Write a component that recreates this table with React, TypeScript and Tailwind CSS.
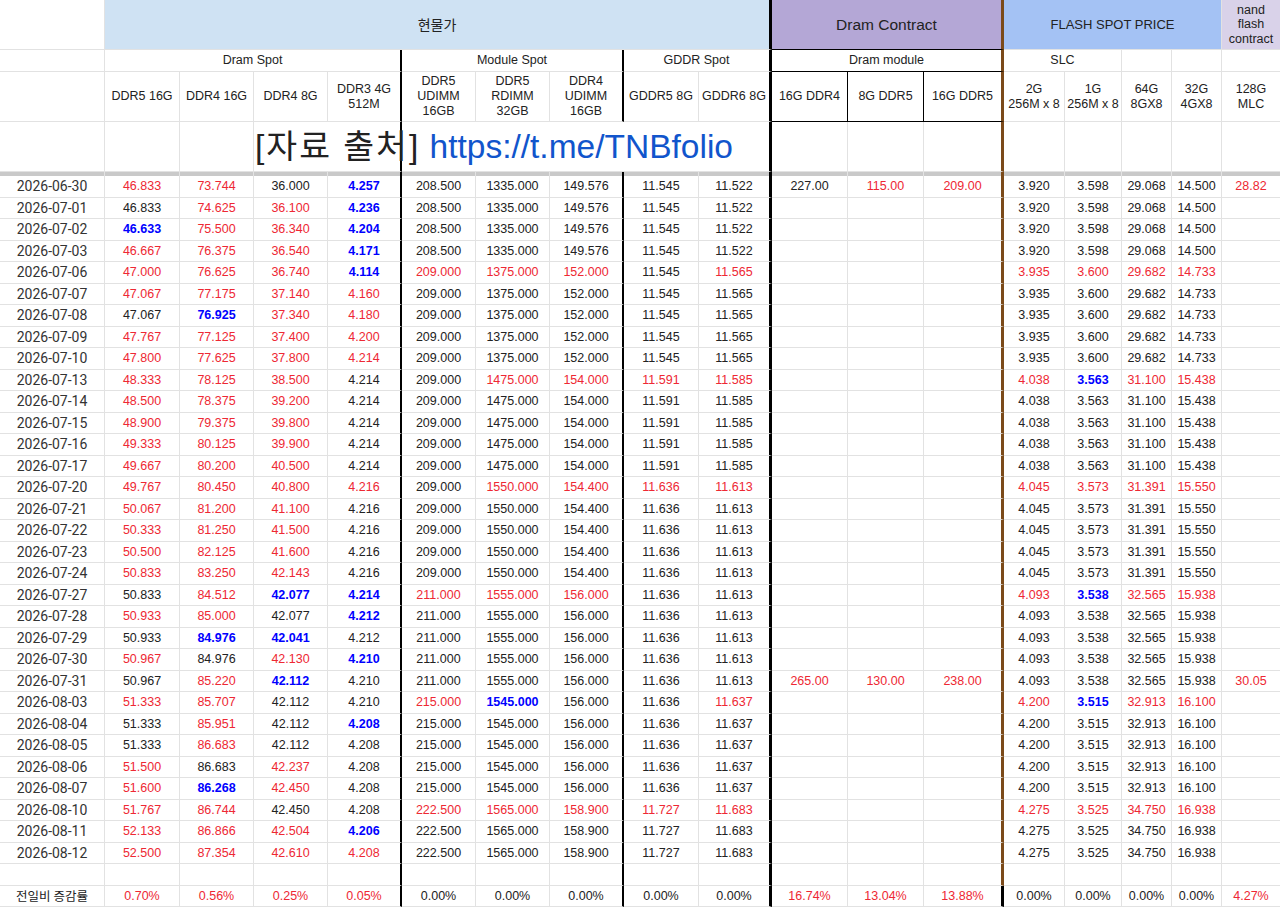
import React from "react";

const GRID =
  "grid grid-cols-[105px_75px_74px_74px_74px_74px_74px_74px_75px_73px_76px_76px_80px_61px_57px_50px_50px_58px]";

const GRAY_R = "border-r border-r-[#e2e2e2]";
const BLACK2_R = "border-r-2 border-r-black";
const BLACK3_R = "border-r-[3px] border-r-black";
const BROWN_R = "border-r-[3px] border-r-[#7b4a1a]";
const GRAY_B = "border-b border-b-[#e2e2e2]";

// right border of each column
const RIGHT = [
  GRAY_R, GRAY_R, GRAY_R, GRAY_R, BLACK2_R,
  GRAY_R, GRAY_R, BLACK2_R,
  GRAY_R, BLACK3_R,
  GRAY_R, GRAY_R, BROWN_R,
  GRAY_R, GRAY_R, GRAY_R, GRAY_R, "border-r-0",
];

const LABELS = [
  "", "DDR5 16G", "DDR4 16G", "DDR4 8G", "DDR3 4G\n512M",
  "DDR5\nUDIMM\n16GB", "DDR5\nRDIMM\n32GB", "DDR4\nUDIMM\n16GB",
  "GDDR5 8G", "GDDR6 8G",
  "16G DDR4", "8G DDR5", "16G DDR5",
  "2G\n256M x 8", "1G\n256M x 8", "64G\n8GX8", "32G\n4GX8", "128G\nMLC",
];

const ROWS: [string, string][] = [
  ["2026-06-30", "46.833r 73.744r 36.000 4.257b 208.500 1335.000 149.576 11.545 11.522 227.00 115.00r 209.00r 3.920 3.598 29.068 14.500 28.82r"],
  ["2026-07-01", "46.833 74.625r 36.100r 4.236b 208.500 1335.000 149.576 11.545 11.522 - - - 3.920 3.598 29.068 14.500 -"],
  ["2026-07-02", "46.633b 75.500r 36.340r 4.204b 208.500 1335.000 149.576 11.545 11.522 - - - 3.920 3.598 29.068 14.500 -"],
  ["2026-07-03", "46.667r 76.375r 36.540r 4.171b 208.500 1335.000 149.576 11.545 11.522 - - - 3.920 3.598 29.068 14.500 -"],
  ["2026-07-06", "47.000r 76.625r 36.740r 4.114b 209.000r 1375.000r 152.000r 11.545 11.565r - - - 3.935r 3.600r 29.682r 14.733r -"],
  ["2026-07-07", "47.067r 77.175r 37.140r 4.160r 209.000 1375.000 152.000 11.545 11.565 - - - 3.935 3.600 29.682 14.733 -"],
  ["2026-07-08", "47.067 76.925b 37.340r 4.180r 209.000 1375.000 152.000 11.545 11.565 - - - 3.935 3.600 29.682 14.733 -"],
  ["2026-07-09", "47.767r 77.125r 37.400r 4.200r 209.000 1375.000 152.000 11.545 11.565 - - - 3.935 3.600 29.682 14.733 -"],
  ["2026-07-10", "47.800r 77.625r 37.800r 4.214r 209.000 1375.000 152.000 11.545 11.565 - - - 3.935 3.600 29.682 14.733 -"],
  ["2026-07-13", "48.333r 78.125r 38.500r 4.214 209.000 1475.000r 154.000r 11.591r 11.585r - - - 4.038r 3.563b 31.100r 15.438r -"],
  ["2026-07-14", "48.500r 78.375r 39.200r 4.214 209.000 1475.000 154.000 11.591 11.585 - - - 4.038 3.563 31.100 15.438 -"],
  ["2026-07-15", "48.900r 79.375r 39.800r 4.214 209.000 1475.000 154.000 11.591 11.585 - - - 4.038 3.563 31.100 15.438 -"],
  ["2026-07-16", "49.333r 80.125r 39.900r 4.214 209.000 1475.000 154.000 11.591 11.585 - - - 4.038 3.563 31.100 15.438 -"],
  ["2026-07-17", "49.667r 80.200r 40.500r 4.214 209.000 1475.000 154.000 11.591 11.585 - - - 4.038 3.563 31.100 15.438 -"],
  ["2026-07-20", "49.767r 80.450r 40.800r 4.216r 209.000 1550.000r 154.400r 11.636r 11.613r - - - 4.045r 3.573r 31.391r 15.550r -"],
  ["2026-07-21", "50.067r 81.200r 41.100r 4.216 209.000 1550.000 154.400 11.636 11.613 - - - 4.045 3.573 31.391 15.550 -"],
  ["2026-07-22", "50.333r 81.250r 41.500r 4.216 209.000 1550.000 154.400 11.636 11.613 - - - 4.045 3.573 31.391 15.550 -"],
  ["2026-07-23", "50.500r 82.125r 41.600r 4.216 209.000 1550.000 154.400 11.636 11.613 - - - 4.045 3.573 31.391 15.550 -"],
  ["2026-07-24", "50.833r 83.250r 42.143r 4.216 209.000 1550.000 154.400 11.636 11.613 - - - 4.045 3.573 31.391 15.550 -"],
  ["2026-07-27", "50.833 84.512r 42.077b 4.214b 211.000r 1555.000r 156.000r 11.636 11.613 - - - 4.093r 3.538b 32.565r 15.938r -"],
  ["2026-07-28", "50.933r 85.000r 42.077 4.212b 211.000 1555.000 156.000 11.636 11.613 - - - 4.093 3.538 32.565 15.938 -"],
  ["2026-07-29", "50.933 84.976b 42.041b 4.212 211.000 1555.000 156.000 11.636 11.613 - - - 4.093 3.538 32.565 15.938 -"],
  ["2026-07-30", "50.967r 84.976 42.130r 4.210b 211.000 1555.000 156.000 11.636 11.613 - - - 4.093 3.538 32.565 15.938 -"],
  ["2026-07-31", "50.967 85.220r 42.112b 4.210 211.000 1555.000 156.000 11.636 11.613 265.00r 130.00r 238.00r 4.093 3.538 32.565 15.938 30.05r"],
  ["2026-08-03", "51.333r 85.707r 42.112 4.210 215.000r 1545.000b 156.000 11.636 11.637r - - - 4.200r 3.515b 32.913r 16.100r -"],
  ["2026-08-04", "51.333 85.951r 42.112 4.208b 215.000 1545.000 156.000 11.636 11.637 - - - 4.200 3.515 32.913 16.100 -"],
  ["2026-08-05", "51.333 86.683r 42.112 4.208 215.000 1545.000 156.000 11.636 11.637 - - - 4.200 3.515 32.913 16.100 -"],
  ["2026-08-06", "51.500r 86.683 42.237r 4.208 215.000 1545.000 156.000 11.636 11.637 - - - 4.200 3.515 32.913 16.100 -"],
  ["2026-08-07", "51.600r 86.268b 42.450r 4.208 215.000 1545.000 156.000 11.636 11.637 - - - 4.200 3.515 32.913 16.100 -"],
  ["2026-08-10", "51.767r 86.744r 42.450 4.208 222.500r 1565.000r 158.900r 11.727r 11.683r - - - 4.275r 3.525r 34.750r 16.938r -"],
  ["2026-08-11", "52.133r 86.866r 42.504r 4.206b 222.500 1565.000 158.900 11.727 11.683 - - - 4.275 3.525 34.750 16.938 -"],
  ["2026-08-12", "52.500r 87.354r 42.610r 4.208r 222.500 1565.000 158.900 11.727 11.683 - - - 4.275 3.525 34.750 16.938 -"],
];

const SUMMARY =
  "0.70%r 0.56%r 0.25%r 0.05%r 0.00% 0.00% 0.00% 0.00% 0.00% 16.74%r 13.04%r 13.88%r 0.00% 0.00% 0.00% 0.00% 4.27%r";

function Value({ token }: { token: string }) {
  if (token === "-") return null;
  const tail = token.slice(-1);
  if (tail === "r") return <span className="text-[#ee2833]">{token.slice(0, -1)}</span>;
  if (tail === "b") return <span className="font-bold text-[#0000ff]">{token.slice(0, -1)}</span>;
  return <span>{token}</span>;
}

function DataRow({ date, values, last }: { date: string; values: string; last?: boolean }) {
  const tokens = values ? values.split(" ") : Array(17).fill("-");
  return (
    <>
      <div className={`h-[21.5px] flex items-center justify-center ${GRAY_B} ${RIGHT[0]} ${last ? "font-['Noto_Sans_CJK_KR',sans-serif] text-[12.5px]" : "font-[Roboto,sans-serif] text-[14px] text-[#333]"}`}>
        {date}
      </div>
      {tokens.map((t, i) => (
        <div
          key={i}
          className={`h-[21.5px] flex items-center justify-center ${GRAY_B} ${last && i === 11 ? BLACK3_R : RIGHT[i + 1]}`}
        >
          <Value token={t} />
        </div>
      ))}
    </>
  );
}

export default function App() {
  return (
    <div className="w-[1280px] h-[908px] overflow-hidden bg-white text-[#222] font-['Liberation_Sans','Noto_Sans_CJK_KR',Arial,sans-serif] text-[12.5px] leading-none">
      <div className={GRID}>
        {/* group headers */}
        <div className={`h-[50px] ${GRAY_B} ${GRAY_R}`} />
        <div className={`col-span-9 h-[50px] bg-[#cfe2f3] flex items-center justify-center text-[14px] ${GRAY_B} ${BLACK3_R}`}>
          현물가
        </div>
        <div className={`col-span-3 h-[50px] bg-[#b4a7d6] flex items-center justify-center text-[15.5px] border-b border-b-black ${BROWN_R}`}>
          Dram Contract
        </div>
        <div className={`col-span-4 h-[50px] bg-[#a4c2f4] flex items-center justify-center text-[13px] ${GRAY_B} ${GRAY_R}`}>
          FLASH SPOT PRICE
        </div>
        <div className={`h-[50px] bg-[#d9d2e9] flex items-center justify-center text-center text-[12.5px] leading-[14.5px] whitespace-pre-line ${GRAY_B}`}>
          {"nand\nflash\ncontract"}
        </div>

        {/* sub groups */}
        <div className={`h-[22px] ${GRAY_B} ${GRAY_R}`} />
        <div className={`col-span-4 h-[22px] flex items-center justify-center ${GRAY_B} ${BLACK2_R}`}>Dram Spot</div>
        <div className={`col-span-3 h-[22px] flex items-center justify-center ${GRAY_B} ${BLACK2_R}`}>Module Spot</div>
        <div className={`col-span-2 h-[22px] flex items-center justify-center ${GRAY_B} ${BLACK3_R}`}>GDDR Spot</div>
        <div className={`col-span-3 h-[22px] flex items-center justify-center border-b border-b-black ${BROWN_R}`}>Dram module</div>
        <div className={`col-span-2 h-[22px] flex items-center justify-center ${GRAY_B} ${GRAY_R}`}>SLC</div>
        <div className={`h-[22px] ${GRAY_B} ${GRAY_R}`} />
        <div className={`h-[22px] ${GRAY_B} ${GRAY_R}`} />
        <div className={`h-[22px] ${GRAY_B}`} />

        {/* column names */}
        {LABELS.map((label, i) => (
          <div
            key={i}
            className={`h-[50px] flex items-center justify-center text-center whitespace-pre-line leading-[15px] ${
              i >= 10 && i <= 12 ? "border-b border-b-black" : GRAY_B
            } ${i === 10 || i === 11 ? "border-r border-r-black" : RIGHT[i]}`}
          >
            {label}
          </div>
        ))}

        {/* source row */}
        <div className={`h-[50px] ${GRAY_B} ${RIGHT[0]}`} />
        <div className={`h-[50px] ${GRAY_B} ${RIGHT[1]}`} />
        <div className={`h-[50px] ${GRAY_B} ${RIGHT[2]}`} />
        <div className={`col-span-2 h-[50px] relative z-10 flex items-center whitespace-nowrap text-[33.5px] ${GRAY_B} ${BLACK2_R}`}>
          <span className="pl-px">
            <span className="tracking-[2px]">[자료 출처]</span>{" "}
            <span className="text-[#1155cc]">https://t.me/TNBfolio</span>
          </span>
        </div>
        <div className={`col-span-5 h-[50px] ${GRAY_B} ${BLACK3_R}`} />
        {RIGHT.slice(10).map((r, i) => (
          <div key={i} className={`h-[50px] ${GRAY_B} ${r}`} />
        ))}

        {/* frozen-row divider */}
        {RIGHT.map((r, i) => (
          <div key={i} className={`h-[4px] bg-[#c9c9c9] ${r}`} />
        ))}

        {ROWS.map(([d, v]) => (
          <DataRow key={d} date={d} values={v} />
        ))}
        <DataRow date="" values="" />
        <DataRow date="전일비 증감률" values={SUMMARY} last />
      </div>
    </div>
  );
}
